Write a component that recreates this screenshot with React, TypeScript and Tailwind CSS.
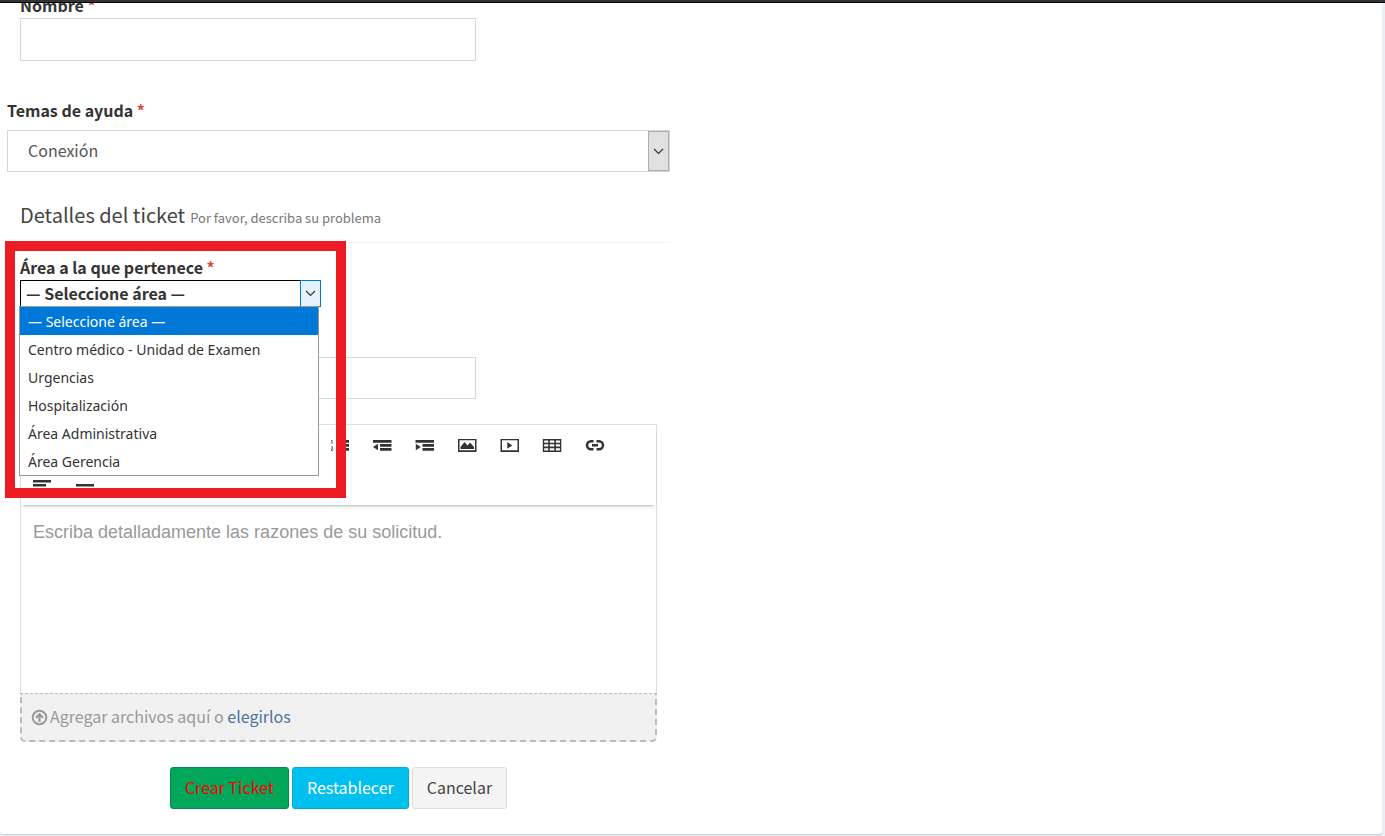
import React from "react";

const areas = [
  "— Seleccione área —",
  "Centro médico - Unidad de Examen",
  "Urgencias",
  "Hospitalización",
  "Área Administrativa",
  "Área Gerencia",
];

function Required() {
  return <span className="text-[#dd4b39]">*</span>;
}

function Chevron() {
  return (
    <svg width="11" height="7" viewBox="0 0 11 7" fill="none" stroke="#333" strokeWidth="1.2">
      <path d="M1 1l4.500 4.500L10 1" />
    </svg>
  );
}

function ToolButton({ label, className = "", children }: { label: string; className?: string; children: React.ReactNode }) {
  return (
    <button type="button" aria-label={label} className={`flex h-10 items-center justify-center text-[#333] ${className}`}>
      <svg width="20" height="14" viewBox="0 0 20 14" fill="currentColor">
        {children}
      </svg>
    </button>
  );
}

function Toolbar() {
  return (
    <div className="relative shadow-[0_3px_3px_-2px_rgba(0,0,0,0.3)]">
      <div className="grid max-w-[595px] grid-cols-14">
        <ToolButton label="Lista numerada" className="col-start-8">
          <path d="M1.500 2h1v4h-1V3H1V2.500zM1 8.500h2v2.200L2 12h1v.8H1V11.600l1.200-1.500V9.300H1z" opacity=".8" />
          <path d="M6 2h13v2.700H6zM6 6h13v2.700H6zM6 10h13v2.700H6z" />
        </ToolButton>
        <ToolButton label="Reducir sangría">
          <path d="M1 2h18.500v2.700H1zM8 6h11.500v2.700H8zM8 10h11.500v2.700H8zM6 5.700v6.600L1 9z" />
        </ToolButton>
        <ToolButton label="Aumentar sangría">
          <path d="M.5 2H19v2.700H.5zM7.500 6H19v2.700H7.500zM7.500 10H19v2.700H7.500zM.8 5.700v6.600l5-3.300z" />
        </ToolButton>
        <ToolButton label="Imagen">
          <path fillRule="evenodd" d="M1 1h18.500v13H1zM2.500 2.300v9.900H18V2.300z" />
          <path d="M3.500 11V9L7.500 4l3 3.500 2.500-3 4 4.500v2z" />
        </ToolButton>
        <ToolButton label="Vídeo">
          <path fillRule="evenodd" d="M.5 1H19v13H.5zM2 2.300v9.900h15.500V2.300z" />
          <path d="M7.300 4v6.800l5-3.400z" />
        </ToolButton>
        <ToolButton label="Tabla">
          <path fillRule="evenodd" d="M.8 1h18.500v13H.8zM2.200 2.400v2.400h4V2.400zM7.800 2.400v2.400h4.500V2.400zM13.900 2.400v2.400h4V2.400zM2.200 6.300v2.300h4V6.300zM7.800 6.300v2.300h4.500V6.300zM13.900 6.300v2.300h4V6.300zM2.200 10.200v2.300h4V10.200zM7.800 10.200v2.300h4.500V10.200zM13.900 10.200v2.300h4V10.200z" />
        </ToolButton>
        <ToolButton label="Enlace">
          <g fill="none" stroke="currentColor" strokeWidth="2.500">
            <path d="M8.500 3.300H6a4 4 0 0 0 0 8h2.500M11.500 3.300H14a4 4 0 0 1 0 8h-2.500M7 7.300h6" />
          </g>
        </ToolButton>
        <ToolButton label="Alinear">
          <path d="M1 2h18v2.500H1zM1 6h13v2.500H1zM1 10h18v2.500H1z" />
        </ToolButton>
        <ToolButton label="Línea horizontal">
          <path d="M1 6h18v2.500H1z" />
        </ToolButton>
      </div>
    </div>
  );
}

function AreaSelect() {
  return (
    <div className="relative w-full max-w-[301px]">
      <label htmlFor="area" className="block pb-px leading-6 font-bold">
        Área a la que pertenece <Required />
      </label>
      <div className="relative">
        <select
          id="area"
          className="block h-[27px] w-full appearance-none border border-black bg-white pr-6 pb-0.5 pl-[5px] leading-5 font-bold text-[#333] outline-none"
        >
          {areas.map((a) => (
            <option key={a}>{a}</option>
          ))}
        </select>
        <span className="pointer-events-none absolute inset-y-0 right-0 flex w-[21px] items-center justify-center border border-[#0078d7] bg-[#e5f1fb]">
          <Chevron />
        </span>
        <ul
          role="listbox"
          aria-label="Área"
          className="absolute top-[26px] right-[2px] -left-px z-20 border border-[#999] bg-white font-['Noto_Sans',sans-serif] text-sm text-[#333]"
        >
          {areas.map((a, i) => (
            <li
              key={a}
              role="option"
              aria-selected={i === 0}
              className={`h-7 px-2 leading-[30px] ${i === 0 ? "bg-[#0078d7] text-white" : ""}`}
            >
              {a}
            </li>
          ))}
        </ul>
      </div>
      <div className="pointer-events-none absolute -top-[14px] -right-[25px] -left-[15px] z-30 h-[257px] border-10 border-[#ed1c24]" />
    </div>
  );
}

export default function App() {
  return (
    <div className="min-h-screen bg-[#ecf0f5] pr-[3px] pb-0.5 font-['Noto_Sans_CJK_SC',sans-serif] text-base text-[#333]">
      <div className="-mr-[3px] h-[3px] border-b border-black bg-[#333]" />
      <form className="rounded-b-[3px] bg-white pb-[25px] shadow-[0_1px_1px_rgba(0,0,0,0.15)]">
        <div className="pl-5">
          <div className="flex h-[15px] items-end overflow-hidden">
            <label htmlFor="nombre" className="block pb-px leading-6 font-bold">
              Nombre <Required />
            </label>
          </div>
          <input id="nombre" className="block h-[43px] w-full max-w-[456px] border border-[#d2d6de] px-3 outline-none" />
        </div>

        <div className="w-full max-w-[670px] pt-[37px] pl-[7px]">
          <label htmlFor="tema" className="block leading-6 font-bold">
            Temas de ayuda <Required />
          </label>
          <div className="relative mt-2">
            <select
              id="tema"
              className="block h-[42px] w-full appearance-none border border-[#d2d6de] bg-white pr-8 pb-0.5 pl-5 text-[#555] outline-none"
            >
              <option>Conexión</option>
            </select>
            <span className="pointer-events-none absolute inset-y-px right-px flex w-[21px] items-center justify-center border border-[#adadad] bg-[#e1e1e1]">
              <Chevron />
            </span>
          </div>
          <h3 className="mt-[27px] flex h-11 items-baseline gap-[5px] border-b border-[#f4f4f4] pl-[13px] text-xl leading-8 text-[#444]">
            Detalles del ticket <small className="text-[13px] text-[#777]">Por favor, describa su problema</small>
          </h3>
        </div>

        <div className="w-full max-w-[657px] pt-3 pl-5">
          <AreaSelect />
          <input aria-label="Asunto" className="mt-[50px] block h-[42px] w-full max-w-[456px] border border-[#d2d6de] px-3 outline-none" />

          <div className="mt-[25px] border border-b-0 border-[#ddd]">
            <Toolbar />
            <textarea
              aria-label="Detalle de la solicitud"
              placeholder="Escriba detalladamente las razones de su solicitud."
              className="block h-[188px] w-full resize-none px-3 py-[14px] font-['Liberation_Sans',sans-serif] text-lg leading-[27px] outline-none placeholder:text-[#999]"
            />
          </div>
          <div className="flex h-[49px] items-center gap-0.5 rounded-b-[5px] border-2 border-t border-dashed border-[#bbb] bg-[#f1f1f1] pl-[9px] text-[#999]">
            <svg width="17" height="17" viewBox="0 0 17 17" fill="none" stroke="#999">
              <circle cx="8.500" cy="8.500" r="6.800" strokeWidth="2" />
              <path d="M8.500 13V6M5 8.800l3.500-3.500L12 8.800" strokeWidth="2.200" />
            </svg>
            <span className="pb-0.5">
              Agregar archivos aquí o{" "}
              <a href="#archivos" className="text-[#4f72a0]">
                elegirlos
              </a>
            </span>
          </div>
          <div className="mt-[25px] flex justify-center gap-[3px]">
            <button type="submit" className="h-[42px] rounded-[3px] border border-[#008d4c] bg-[#00a65a] px-3.5 pb-0.5 text-[#f00]">
              Crear Ticket
            </button>
            <button type="reset" className="h-[42px] rounded-[3px] border border-[#00acd6] bg-[#00c0ef] px-3.5 pb-0.5 text-white">
              Restablecer
            </button>
            <button type="button" className="h-[42px] rounded-[3px] border border-[#ddd] bg-[#f4f4f4] px-3.5 pb-0.5 text-[#444]">
              Cancelar
            </button>
          </div>
        </div>
      </form>
    </div>
  );
}
